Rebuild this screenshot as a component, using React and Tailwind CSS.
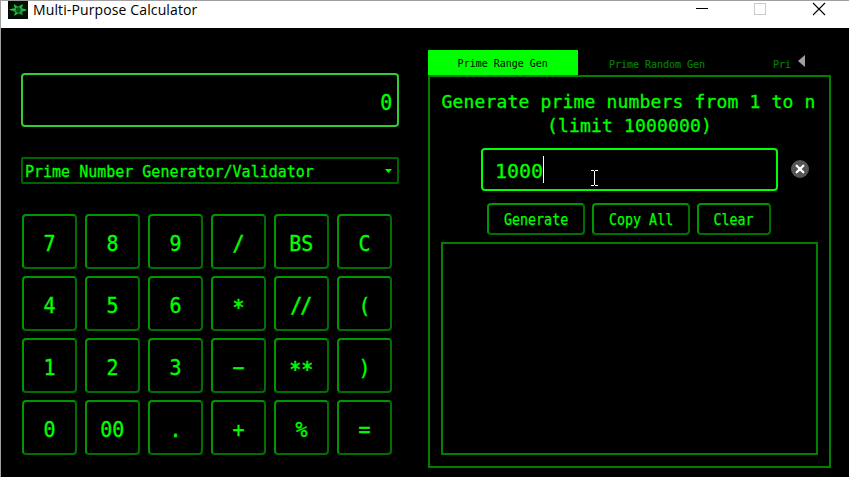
import React from "react";

const mono = "font-['DejaVu_Sans_Mono','Liberation_Mono',monospace] whitespace-pre leading-none";

const glyphStyles = {
  "//": "tracking-[-2.2px] pr-[2px] pt-[4px] [-webkit-text-stroke-width:0.5px]",
  "/": "pt-[4px] [-webkit-text-stroke-width:0.5px]",
  "*": "pt-[8px] [-webkit-text-stroke-width:0.6px]",
  "**": "pt-[8px] [-webkit-text-stroke-width:0.6px]",
};

function Key({ label }) {
  return (
    <button className="flex h-[55px] w-[55px] items-center justify-center rounded-[4px] border-2 border-t-[#009600] border-l-[#009600] border-r-[#006e00] border-b-[#006e00] bg-black text-[#00ff00]">
      <span className={`${mono} inline-block scale-x-[0.906] text-[22px] ${glyphStyles[label] || "pt-[5px] [-webkit-text-stroke-width:0.35px]"}`}>{label}</span>
    </button>
  );
}

function Action({ label, width }) {
  return (
    <button className={`${width} flex h-8 items-center justify-center rounded-[4px] border-2 border-t-[#009600] border-l-[#009600] border-r-[#006e00] border-b-[#006e00] text-[#00ff00]`}>
      <span className={`${mono} inline-block scale-x-[0.886] pt-[3px] text-[15px] [-webkit-text-stroke-width:0.25px]`}>{label}</span>
    </button>
  );
}

function TitleBar() {
  return (
    <header className="flex h-7 w-full shrink-0 border-t border-[#a0a0a0] bg-white pl-[7px]">
      <svg className="h-[18px] w-5 shrink-0" viewBox="0 0 20 18">
        <rect width="20" height="18" fill="#020d04" />
        <path d="M1 8.5 6.500 7 6 3l4 2.500 5-2.500-1 4 5 2-5 2 1 3-4.500-1.500L6 15l1-4Z" fill="#17a035" />
        <path d="M2 8.500h5M6.500 4l1.500 3M14 4l-2 3M13 9h5M7 14l2-3" stroke="#2bc94b" strokeWidth="1" fill="none" />
        <path d="m8 7 3-1 2 3-2 3-3-1Z" fill="#075019" />
      </svg>
      <h1 className="ml-[5px] w-[660px] font-['Open_Sans','Noto_Sans',sans-serif] text-[14px] leading-[17px] tracking-[0.12px] text-black">
        Multi-Purpose Calculator
      </h1>
      <svg className="h-[18px] w-[140px] shrink-0" viewBox="0 0 140 18" fill="none">
        <path d="M3 7.5h12" stroke="#000" />
        <rect x="61.5" y="2.5" width="11" height="11" stroke="#ccc" />
        <path d="m120 2 12 12m0-12-12 12" stroke="#000" strokeWidth="1.1" />
      </svg>
    </header>
  );
}

const keys = ["7", "8", "9", "/", "BS", "C", "4", "5", "6", "*", "//", "(", "1", "2", "3", "−", "**", ")", "0", "00", ".", "+", "%", "="];

export default function App() {
  return (
    <div className="relative flex h-[477px] w-[849px] flex-col overflow-hidden border-l border-[#a0a0a0] bg-black text-[#00ff00]">
      <TitleBar />
      <main className="flex flex-1 pl-5">
        <section className="w-[378px] pt-[45px]">
          <div className="flex h-[54px] items-center justify-end rounded-[4px] border-2 border-[#32cd32] pr-[5px]">
            <span className={`${mono} inline-block origin-right scale-x-[0.906] pt-[5px] text-[22px] [-webkit-text-stroke-width:0.35px]`}>0</span>
          </div>
          <div className="mt-[30px] flex h-[27px] items-center justify-between rounded-[2px] border-2 border-[#006400] pl-[2px] pr-[5px]">
            <span className={`${mono} inline-block origin-left scale-x-[0.937] pt-[2px] text-[16px] [-webkit-text-stroke-width:0.3px]`}>Prime Number Generator/Validator</span>
            <svg className="h-1 w-[7px]" viewBox="0 0 7 4"><path d="M0 0h7L3.5 4Z" fill="#00ff00" /></svg>
          </div>
          <div className="ml-px mt-[30px] grid w-[370px] grid-cols-6 gap-x-2 gap-y-[7px]">
            {keys.map((key) => <Key key={key} label={key} />)}
          </div>
        </section>

        <section className="ml-[29px] w-[403px] pt-[22px]">
          <nav className="flex h-[25px]">
            <div className="flex w-[150px] items-center justify-center bg-[#00ff00] text-black">
              <span className={`${mono} inline-block scale-x-[0.907] pt-px text-[11px]`}>Prime Range Gen</span>
            </div>
            <div className="flex w-[158px] items-center justify-center text-[#008000]">
              <span className={`${mono} inline-block scale-x-[0.907] pt-[3px] text-[11px] [-webkit-text-stroke-width:0.2px]`}>Prime Random Gen</span>
            </div>
            <div className="ml-[37px] flex w-[19px] items-center text-[#008000]">
              <span className={`${mono} inline-block origin-left scale-x-[0.907] pt-[3px] text-[11px] [-webkit-text-stroke-width:0.2px]`}>Pri</span>
            </div>
            <svg className="ml-[6px] mt-[5px] h-3 w-[7px]" viewBox="0 0 7 12"><path d="M7 0v12L0 6Z" fill="#a0a0a0" /></svg>
          </nav>
          <div className="flex h-[393px] flex-col border-2 border-[#008000] px-[11px] pt-[13px]">
            <h2 className={`${mono} -ml-[5px] -mr-[3px] h-[58px] text-center text-[18px] tracking-[0.163px] [-webkit-text-stroke-width:0.3px]`}>
              <span className="block h-6 leading-6">Generate prime numbers from 1 to n</span>
              <span className="block h-6 pl-[2px] leading-6">(limit 1000000)</span>
            </h2>
            <div className="flex items-center pl-10">
              <div className="flex h-[43px] w-[297px] items-center rounded-[4px] border-2 border-[#00ff00] pl-3">
                <span className={`${mono} pt-[3px] text-[20px] [-webkit-text-stroke-width:0.3px]`}>1000</span>
                <span className="h-[27px] w-px bg-white" />
                <svg className="ml-[47px] mt-4 h-4 w-[7px]" viewBox="0 0 7 16" fill="none"><path d="M0 .5h3M4 .5h3M3.5 1v14M0 15.5h3M4 15.5h3" stroke="#fff" /></svg>
              </div>
              <svg className="-mt-[2px] ml-[13px] h-[18px] w-[18px]" viewBox="0 0 18 18">
                <circle cx="9" cy="9" r="9" fill="#555" />
                <path d="m5.700 5.700 6.600 6.600m0-6.600-6.600 6.600" stroke="#fff" strokeWidth="2.3" strokeLinecap="round" />
              </svg>
            </div>
            <div className="ml-[46px] mt-3 flex gap-[7px]">
              <Action label="Generate" width="w-[98px]" />
              <Action label="Copy All" width="w-[98px]" />
              <Action label="Clear" width="w-[74px]" />
            </div>
            <div className="mt-[7px] h-[213px] w-[377px] border-2 border-[#008000]" />
          </div>
        </section>
      </main>
    </div>
  );
}
